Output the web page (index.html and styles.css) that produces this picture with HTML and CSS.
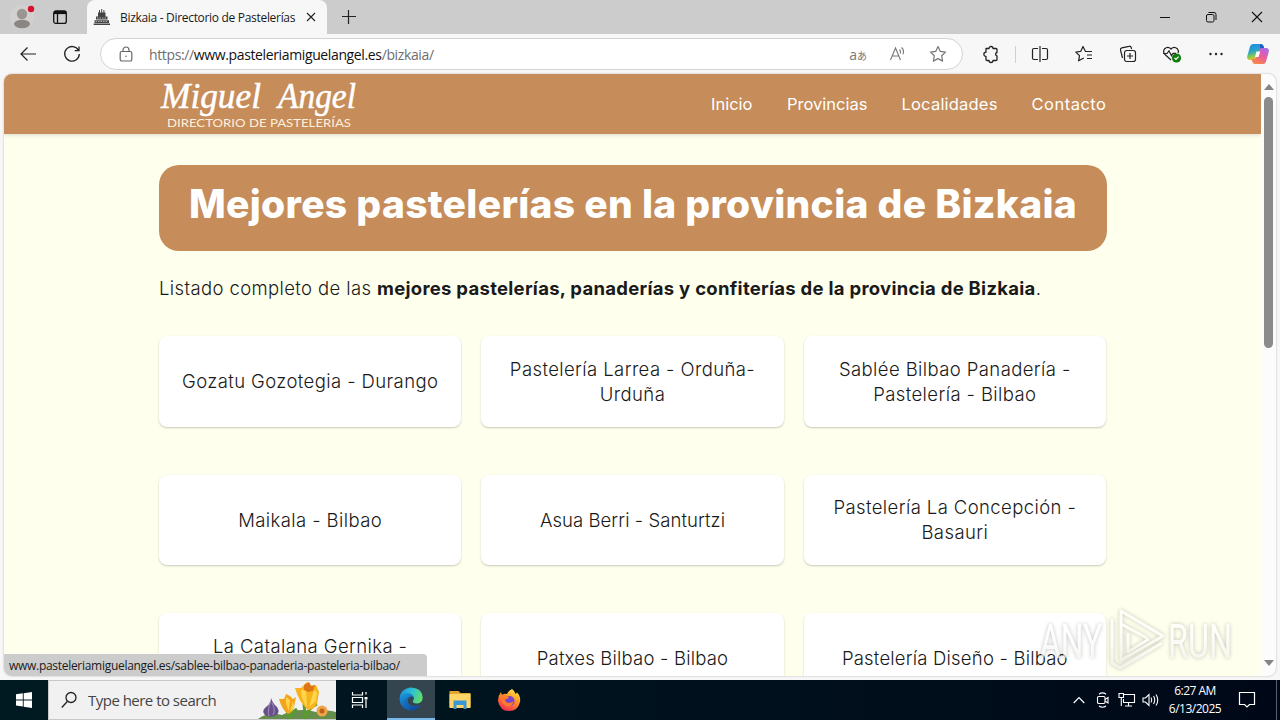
FILE: index.html
```html
<!DOCTYPE html>
<html lang="es">
<head>
    <meta charset="UTF-8">
    <meta name="viewport" content="width=device-width, initial-scale=1.0">
    <title>Bizkaia - Directorio de Pastelerías</title>
    <link rel="stylesheet" href="styles.css">
</head>
<body>
    <div class="tabbar">
        <div class="profile">
            <svg width="36" height="34" viewBox="0 0 36 34"><circle cx="18" cy="17" r="12" fill="#d3d1cf"/><circle cx="18" cy="14" r="5.2" fill="#9a9592"/><ellipse cx="18" cy="24" rx="8" ry="4.2" fill="#8b8683"/><circle cx="27" cy="9" r="3.2" fill="#d8122c"/></svg>
        </div>
        <div class="workspaces">
            <svg width="16" height="16" viewBox="0 0 16 16" fill="none" stroke="#111" stroke-width="1.3"><rect x="1.7" y="2" width="12.6" height="12.4" rx="2.2"/><path d="M2 3.6h12" stroke-width="3"/><path d="M5.5 4v10"/></svg>
        </div>
        <div class="tab">
            <svg width="18" height="18" viewBox="0 0 18 18" fill="#444"><path d="M5 4.500h7.500v4H5zM3 8.600h11.500v3H3zM1.500 12.200h14.500v2.700H1.500zM.7 15.500h16.300v1.400H.7zM6 2h1v2.500H6zM8.200 1h1v3.500h-1zM10.400 2h1v2.500h-1z"/><path d="M4 10h9M2.500 13.500h12" stroke="#ddd" stroke-width=".7" stroke-dasharray="1.500 1"/></svg>
            <span class="tab-title">Bizkaia - Directorio de Pastelerías</span>
            <svg class="tab-close" width="10" height="10" viewBox="0 0 10 10" stroke="#222" stroke-width="1.1"><path d="M1 1l8 8M9 1l-8 8"/></svg>
        </div>
        <svg class="new-tab" width="14" height="14" viewBox="0 0 14 14" stroke="#222" stroke-width="1.2"><path d="M0 6.500h14M6.500 0v14"/></svg>
        <div class="window-buttons">
            <span><svg width="12" height="12" viewBox="0 0 12 12" stroke="#111"><path d="M1 6.500h10"/></svg></span>
            <span><svg width="12" height="12" viewBox="0 0 12 12" fill="none" stroke="#111"><rect x="1.500" y="3.500" width="7.500" height="7.500" rx="1.500"/><path d="M3.500 1.500h5.500q2 0 2 2V9"/></svg></span>
            <span><svg width="12" height="12" viewBox="0 0 12 12" stroke="#111" stroke-width="1.100"><path d="M1 1l10 10M11 1L1 11"/></svg></span>
        </div>
    </div>

    <div class="toolbar">
        <div class="tool back"><svg width="18" height="16" viewBox="0 0 18 16" fill="none" stroke="#222" stroke-width="1.200"><path d="M17 8H2M8.500 1.500L2 8l6.500 6.500"/></svg></div>
        <div class="tool"><svg width="18" height="18" viewBox="0 0 18 18" fill="none" stroke="#222" stroke-width="1.300"><path d="M15.500 5.500A7.300 7.300 0 1 0 16.300 9M16 1.500v4.200h-4.300"/></svg></div>
        <div class="address">
            <svg class="lock" width="14" height="16" viewBox="0 0 14 16" fill="none" stroke="#666" stroke-width="1.200"><rect x="1.200" y="5.500" width="11.600" height="9.500" rx="1.600"/><path d="M4 5.500V4a3 3 0 0 1 6 0v1.500"/><circle cx="7" cy="10.300" r=".8" fill="#666" stroke="none"/></svg>
            <span class="url">https://<b>www.pasteleriamiguelangel.es</b>/bizkaia/</span>
            <span class="translate">a<small>あ</small></span>
            <svg class="read" width="18" height="16" viewBox="0 0 18 16" fill="none" stroke="#777" stroke-width="1.100"><path d="M1.500 14L6.500 2l5 12M3 10h7M10.500 3.500q1.500 1.500.8 4M12.500 1.500q3 2.800 1.500 6.800"/></svg>
            <svg width="18" height="18" viewBox="0 0 18 18" fill="none" stroke="#777" stroke-width="1.200" stroke-linejoin="round"><path d="M9 1.500l2.300 4.900 5.200.7-3.800 3.700.9 5.300L9 13.600l-4.600 2.500.9-5.300L1.500 7.100l5.200-.7z"/></svg>
        </div>
        <div class="tool ext"><svg width="18" height="18" viewBox="0 0 18 18" fill="none" stroke="#222" stroke-width="1.300" stroke-linejoin="round"><path d="M4 3.500h3a2 2 0 0 1 4 0h3q1 0 1 1v3a1.800 1.800 0 0 0 0 3.500v3.500q0 1-1 1h-3a2 2 0 0 1-4 0H5q-1 0-1-1V11.500a2 2 0 0 1 0-4.300z"/></svg></div>
        <div class="separator"></div>
        <div class="tool"><svg width="18" height="18" viewBox="0 0 18 18" fill="none" stroke="#222" stroke-width="1.200"><path d="M7 3.500H3q-1.500 0-1.500 1.500v8q0 1.500 1.500 1.500h4M11 3.500h4q1.500 0 1.500 1.500v8q0 1.500-1.500 1.500h-4M9 1v16"/></svg></div>
        <div class="tool"><svg width="18" height="18" viewBox="0 0 18 18" fill="none" stroke="#222" stroke-width="1.200" stroke-linejoin="round"><path d="M11 6.500h-.5L8 1.500 5.800 6.300l-5 .7 3.700 3.600-.9 5.200 5.200-2.800M11 6.500h6M12 10h5M12 13.500h5"/></svg></div>
        <div class="tool"><svg width="18" height="18" viewBox="0 0 18 18" fill="none" stroke="#222" stroke-width="1.200"><path d="M3.500 13L1.500 5q-.4-1.700 1.300-2.200L10 1.300q1.600-.4 2.200 1.200l.4 1.500"/><rect x="5.500" y="5.500" width="11" height="11" rx="2.200"/><path d="M11 8v6M8 11h6"/></svg></div>
        <div class="tool"><svg width="20" height="18" viewBox="0 0 20 18" fill="none" stroke="#222" stroke-width="1.200"><path d="M9 15L3 9.500q-2.500-3-.4-5.700Q6 .8 9 4q3-3.200 6.300-.3 1.700 2 .8 4.300M1 8.500h4l2-2.700 2.500 5 1.500-2.500h3"/><circle cx="14.500" cy="13" r="4.600" fill="#107c10" stroke="none"/><path d="M12.500 13l1.500 1.500 2.600-2.800" stroke="#fff"/></svg></div>
        <div class="tool"><svg width="16" height="4" viewBox="0 0 16 4" fill="#222"><circle cx="2.500" cy="2" r="1.200"/><circle cx="8" cy="2" r="1.200"/><circle cx="13.500" cy="2" r="1.200"/></svg></div>
        <div class="tool copilot">
            <svg width="24" height="24" viewBox="0 0 24 24">
                <defs>
                    <linearGradient id="cp1" x1="0" y1="0" x2=".3" y2="1"><stop offset="0" stop-color="#1b88e8"/><stop offset=".5" stop-color="#2aa6c8"/><stop offset=".8" stop-color="#8ccb4a"/><stop offset="1" stop-color="#f5bd22"/></linearGradient>
                    <linearGradient id="cp2" x1=".8" y1="0" x2=".3" y2="1"><stop offset="0" stop-color="#a66bea"/><stop offset=".5" stop-color="#ec5b9c"/><stop offset="1" stop-color="#f88a46"/></linearGradient>
                </defs>
                <path d="M7 2h8q2 0 2.700 2.200L18.500 7H16q-2 0-2.700 2.200L11 16q-.8 2-3 2H4q-3.500 0-2.700-4L4 4.500Q4.700 2 7 2z" fill="url(#cp1)"/>
                <path d="M14 2q2.800 0 3.600 2.500L18.400 7h-4.200z" fill="#2458cb"/>
                <path d="M17 22H9q-2 0-2.700-2.200L5.500 17H8q2 0 2.700-2.200L13 8q.8-2 3-2h4q3.500 0 2.700 4L20 19.500q-.7 2.500-3 2.500z" fill="url(#cp2)"/>
                <path d="M10.500 9.500h3.700l-1.600 5.500H9z" fill="#fff"/>
            </svg>
        </div>
    </div>

    <div class="viewport">
        <div class="page">
            <header class="site-header">
                <svg class="logo" width="200" height="60" viewBox="0 0 200 60">
                    <text class="logo-name" x="2" y="34" textLength="100" lengthAdjust="spacingAndGlyphs">Miguel</text>
                    <text class="logo-name" x="119" y="34" textLength="78" lengthAdjust="spacingAndGlyphs">Angel</text>
                    <text class="logo-sub" x="8" y="53" textLength="184" lengthAdjust="spacingAndGlyphs">DIRECTORIO DE PASTELERÍAS</text>
                </svg>
                <nav class="menu">
                    <a class="inicio">Inicio</a>
                    <a class="provincias">Provincias</a>
                    <a class="localidades">Localidades</a>
                    <a class="contacto">Contacto</a>
                </nav>
            </header>
            <main class="container">
                <h1>Mejores pastelerías en la provincia de Bizkaia</h1>
                <p class="intro">Listado completo de las <strong>mejores pastelerías, panaderías y confiterías de la provincia de Bizkaia</strong>.</p>
                <div class="cards">
                    <a class="card">Gozatu Gozotegia - Durango</a>
                    <a class="card">Pastelería Larrea - Orduña-<br>Urduña</a>
                    <a class="card">Sablée Bilbao Panadería -<br>Pastelería - Bilbao</a>
                    <a class="card">Maikala - Bilbao</a>
                    <a class="card tighter">Asua Berri - Santurtzi</a>
                    <a class="card">Pastelería La Concepción -<br>Basauri</a>
                    <a class="card">La Catalana Gernika -<br>&nbsp;</a>
                    <a class="card tight">Patxes Bilbao - Bilbao</a>
                    <a class="card tight">Pastelería Diseño - Bilbao</a>
                </div>
            </main>
        </div>
        <div class="scrollbar">
            <svg width="10" height="6" viewBox="0 0 10 6" fill="#858585"><path d="M5 0l5 6H0z"/></svg>
            <div class="thumb"></div>
            <svg class="down" width="10" height="6" viewBox="0 0 10 6" fill="#858585"><path d="M5 6l5-6H0z"/></svg>
        </div>
        <div class="status">www.pasteleriamiguelangel.es/sablee-bilbao-panaderia-pasteleria-bilbao/</div>
    </div>

    <svg class="watermark" width="210" height="76" viewBox="0 0 210 76">
        <defs><linearGradient id="wm" x1="0" y1="0" x2="0" y2="1"><stop offset=".4" stop-color="#fff"/><stop offset="1" stop-color="#eeede6"/></linearGradient></defs>
        <text x="10" y="56" textLength="62" lengthAdjust="spacingAndGlyphs">ANY</text>
        <g fill="none" stroke="url(#wm)" stroke-width="3" stroke-linejoin="round">
            <path d="M91 22V9l42 25-42 24V22l26 14"/>
            <path d="M82 17v44l8 5 42-25"/>
            <path d="M98 31v19l21-13"/>
        </g>
        <text x="138" y="56" textLength="64" lengthAdjust="spacingAndGlyphs">RUN</text>
    </svg>

    <div class="taskbar">
        <div class="start"><svg width="16" height="16" viewBox="0 0 16 16" fill="#fff"><path d="M0 2.300l6.800-1v6.200H0zM7.700 1.200L16 0v7.500H7.700zM0 8.400h6.800v6.200L0 13.600zM7.700 8.400H16V16l-8.300-1.200z"/></svg></div>
        <div class="search">
            <svg width="16" height="18" viewBox="0 0 16 18" fill="none" stroke="#222" stroke-width="1.300"><circle cx="10" cy="6.500" r="5"/><path d="M6.500 10.300L.8 16.500"/></svg>
            <span>Type here to search</span>
            <svg class="flowers" width="80" height="38" viewBox="0 0 80 38">
                <path d="M2 38q10-8 24-4 16-8 34-3 12-3 20 0v7z" fill="#668e4b"/>
                <path d="M49 38Q49 30 48 23M49 38q2-10 12-15M33 38q-2-6-2-13M34 37q2-6 7-9" fill="none" stroke="#5a9a31" stroke-width="3"/>
                <path d="M15 17q2 6 6 9 4 6-2 9-6 2-10-1-4-4 1-8 5-3 5-9z" fill="#65508a"/>
                <path d="M15 20q-4 9-2 15M16 22q4 7 1 12" fill="none" stroke="#9a80b4" stroke-width="1.200"/>
                <path d="M23 18l5 0 2-5 4 2 3 3 3-2-2 10q-2 6-6 7-6-4-9-15z" fill="#f2a51b"/>
                <path d="M30 16l4 3-1 11q-4-7-3-14zM37 20l-3 11 4-5z" fill="#ffd447"/>
                <path d="M39 7l6 0 6-6 5 4 4-1 3 7-2 12q-4 6-9 6-9-8-13-22z" fill="#f7b21c"/>
                <path d="M45 9l5 0 1 17q-6-7-6-17zM58 9l-5 17 7-6 1-9z" fill="#ffd64a"/>
                <path d="M48 4l5-3 2 4 4-1-2 6-5 1-4-2z" fill="#de7615"/>
                <circle cx="66" cy="30" r="5.500" fill="#eda64a"/><circle cx="66" cy="30" r="2.500" fill="#c45f1a"/>
            </svg>
        </div>
        <div class="app"><svg width="18" height="18" viewBox="0 0 18 18" fill="none" stroke="#fff" stroke-width="1.200"><path d="M1.500 1v3h10V1M1.500 17v-3h10v3M1.500 6.500h10v5h-10zM15 1v2.500M15 9v8"/><path d="M13.500 6h3v2.500h-3z" fill="#fff" stroke="none"/></svg></div>
        <div class="app active">
            <svg width="24" height="24" viewBox="0 0 24 24">
                <defs>
                    <linearGradient id="eg1" x1="0" y1=".3" x2="1" y2=".6"><stop offset="0" stop-color="#1b8fdc"/><stop offset=".5" stop-color="#30c3d1"/><stop offset="1" stop-color="#63de65"/></linearGradient>
                    <linearGradient id="eg2" x1="0" y1="0" x2=".6" y2="1"><stop offset="0" stop-color="#1b9de2"/><stop offset="1" stop-color="#104c9f"/></linearGradient>
                </defs>
                <path d="M.6 11Q1.500 2 11 .5q12 0 12.700 10.300-.3 5-5 5.700-5 .2-4.900-2.500 2-2 .6-4.500-5-5.500-13.800 1.500z" fill="url(#eg1)"/>
                <path d="M.5 12Q1 6 8 6q5 0 6.500 4-4-1.500-5.500 2-1.500 6 6 7 3.500.2 6.500-1.500Q18 24 11 23.500.8 22 .5 12z" fill="url(#eg2)"/>
                <path d="M9 12q-4 6 2.500 11.400Q6 22 5.500 16.500 5.500 12 9.500 10z" fill="#1668b5"/>
            </svg>
        </div>
        <div class="app"><svg width="22" height="20" viewBox="0 0 22 20"><path d="M.5 1h9l2 2h10v14H.5z" fill="#e2a52d"/><path d="M.5 4h21v14H.5z" fill="#ffd667"/><path d="M4.500 10.500h13V19h-3v-4h-7v4h-3z" fill="#3c96d3"/></svg></div>
        <div class="app">
            <svg width="24" height="24" viewBox="0 0 24 24">
                <defs><linearGradient id="ff1" x1=".8" y1="0" x2=".3" y2="1"><stop offset="0" stop-color="#fff04e"/><stop offset=".4" stop-color="#ff9a25"/><stop offset="1" stop-color="#f42a58"/></linearGradient></defs>
                <path d="M15 1q3 2 3.500 5 1.500-.5 1-2Q24 8 23 14q-2 9-11 9T1 13Q.8 8 4 4l1 3q2-2 5-1 1-3 5-5z" fill="url(#ff1)"/>
                <circle cx="12.500" cy="13" r="5" fill="#7646d2"/>
                <path d="M4 8q5-2 8 1-1 2-4 2.500 0 3 4 3.500 3 0 4.500-2-1 6-6.500 5.500Q4 17 4 8z" fill="#ff7a2a"/>
            </svg>
        </div>
        <div class="tray">
            <span><svg width="12" height="8" viewBox="0 0 12 8" fill="none" stroke="#fff" stroke-width="1.200"><path d="M.7 7L6 1.500 11.300 7"/></svg></span>
            <span><svg width="14" height="18" viewBox="0 0 14 18" fill="none" stroke="#fff" stroke-width="1.100"><rect x="1.500" y="5.500" width="7.500" height="7" rx="1.200"/><path d="M9 8.500l3-2v5.500l-3-2M3 3.200Q6.500.5 10 3.200M3 15q3.500 2.500 7 0"/></svg></span>
            <span><svg width="18" height="16" viewBox="0 0 18 16" fill="none" stroke="#fff" stroke-width="1.100"><path d="M6 2.500h10.500v8H5.500V7M10.500 10.500v3M7 14h7M1 1.500h4.500v4H1zM3.300 5.500v8.500"/></svg></span>
            <span><svg width="18" height="16" viewBox="0 0 18 16" fill="none" stroke="#fff" stroke-width="1.100"><path d="M1 6h2.500L7 2.500v11L3.500 10H1zM9 5.500q1.500 2.500 0 5M11.500 4q2.500 4 0 8M14 2.500q3.500 5.500 0 11"/></svg></span>
        </div>
        <div class="clock"><span>6:27 AM</span><span>6/13/2025</span></div>
        <div class="notify"><svg width="18" height="18" viewBox="0 0 18 18" fill="none" stroke="#fff" stroke-width="1.200"><path d="M1.500 1.500h15v12h-5L9 16l-2.500-2.500h-5z"/></svg></div>
        <div class="desktop"></div>
    </div>
</body>
</html>
```

FILE: styles.css
```css
* {
    box-sizing: border-box;
}
body {
    margin: 0;
    width: 1280px;
    height: 720px;
    overflow: hidden;
    display: flex;
    flex-direction: column;
    background-color: #f7f7f7;
    font-family: 'Open Sans', 'Noto Sans', 'Noto Sans CJK JP', sans-serif;
    color: #1a1a1a;
}
svg {
    display: block;
    flex-shrink: 0;
    overflow: visible;
}

/* browser tabs */
.tabbar {
    height: 34px;
    flex-shrink: 0;
    background-color: #cccccc;
    display: flex;
    align-items: center;
}
.profile {
    width: 42px;
    padding-left: 4px;
}
.workspaces {
    width: 45px;
    padding-left: 10px;
}
.tab {
    width: 240px;
    height: 34px;
    padding: 0 11px 0 6px;
    display: flex;
    align-items: center;
    background-color: #f7f7f7;
    border-radius: 8px 8px 0 0;
}
.tab-title {
    width: 177px;
    margin-left: 9px;
    font-size: 12px;
    letter-spacing: -0.31px;
    white-space: nowrap;
}
.tab-close {
    margin-left: auto;
}
.new-tab {
    margin-left: 15px;
}
.window-buttons {
    margin-left: auto;
    display: flex;
}
.window-buttons span {
    width: 46px;
    display: flex;
    justify-content: center;
}

/* address row */
.toolbar {
    height: 40px;
    flex-shrink: 0;
    display: flex;
    align-items: center;
}
.tool {
    width: 44px;
    display: flex;
    justify-content: center;
}
.back {
    margin-left: 6px;
}
.address {
    width: 863px;
    height: 32px;
    margin-left: 6px;
    padding: 0 15px 0 18px;
    display: flex;
    align-items: center;
    background-color: #fff;
    border: 1px solid #d3d3d3;
    border-radius: 16px;
}
.url {
    margin-left: 16px;
    font-size: 14px;
    letter-spacing: -0.37px;
    color: #6e6e6e;
}
.url b {
    font-weight: 400;
    color: #111;
}
.translate {
    margin-left: auto;
    margin-right: 22px;
    font-size: 14px;
    letter-spacing: 0;
    color: #777;
}
.translate small {
    font-size: 10px;
}
.read {
    margin-right: 22px;
}
.ext {
    margin-left: 6px;
}
.separator {
    width: 1px;
    height: 17px;
    margin: 0 2px;
    background-color: #d0d0d0;
}
.copilot {
    width: 40px;
}

/* web page */
.viewport {
    position: relative;
    width: 1272px;
    height: 602px;
    margin: 0 4px 4px;
    display: flex;
    flex-shrink: 0;
    overflow: hidden;
    border-radius: 8px;
    background-color: #fcfcfc;
    box-shadow: 0 0 2px rgba(0, 0, 0, 0.3);
}
.page {
    width: 1257px;
    overflow: hidden;
    background-color: #ffffee;
    font-family: 'Inter', 'Open Sans', sans-serif;
}
.site-header {
    height: 60px;
    padding: 0 154px 0 155px;
    display: flex;
    justify-content: space-between;
    align-items: center;
    background-color: #c68c59;
    box-shadow: 0 1px 4px rgba(0, 0, 0, 0.15);
}
.logo-name {
    font-family: 'Liberation Serif', serif;
    font-size: 35px;
    font-style: italic;
    fill: #fff;
    stroke: #fff;
    stroke-width: 0.5px;
}
.logo-sub {
    font-family: 'Lato', sans-serif;
    font-size: 10.5px;
    fill: #ffefdc;
}
.menu {
    display: flex;
    gap: 34px;
    padding-bottom: 1px;
    font-size: 16.5px;
    color: #fff;
}
.inicio {
    width: 42px;
}
.provincias {
    width: 80.5px;
}
.localidades {
    width: 96px;
    letter-spacing: 0.2px;
}
.contacto {
    width: 75.5px;
    letter-spacing: 0.5px;
}
.container {
    width: 948px;
    margin: 31px auto 0 155px;
}
h1 {
    height: 86px;
    margin: 0;
    line-height: 77px;
    text-align: center;
    white-space: nowrap;
    font-size: 39px;
    letter-spacing: 0.3px;
    font-weight: 800;
    color: #fff;
    background-color: #c68c59;
    border-radius: 20px;
}
.intro {
    margin: 24px 0 35px;
    line-height: 26px;
    font-size: 18.5px;
    letter-spacing: 0.38px;
    font-weight: 300;
    white-space: nowrap;
}
.intro strong {
    font-weight: 700;
    letter-spacing: 0.28px;
}
.cards {
    width: 947px;
    display: grid;
    grid-template-columns: repeat(3, 1fr);
    gap: 48px 20px;
}
.card {
    height: 90.6px;
    padding-top: 1px;
    display: flex;
    justify-content: center;
    align-items: center;
    text-align: center;
    white-space: nowrap;
    line-height: 25px;
    font-size: 18.5px;
    letter-spacing: 0.4px;
    font-weight: 300;
    background-color: #fff;
    border-radius: 8px;
    box-shadow: 0 1px 2px rgba(0, 0, 0, 0.22);
}
.tight {
    letter-spacing: 0.2px;
}
.tighter {
    letter-spacing: 0.06px;
}
.scrollbar {
    width: 15px;
    padding-top: 10px;
    display: flex;
    flex-direction: column;
    align-items: center;
}
.thumb {
    width: 9px;
    height: 251px;
    margin-top: 7px;
    background-color: #8b8b8b;
    border-radius: 5px;
}
.down {
    margin-top: auto;
    margin-bottom: 10px;
}
.status {
    position: absolute;
    left: 0;
    bottom: 0;
    width: 423px;
    height: 22px;
    padding-left: 5px;
    line-height: 23px;
    font-size: 12px;
    letter-spacing: -0.29px;
    white-space: nowrap;
    background-color: #cccccc;
    border-top-right-radius: 4px;
}
.watermark {
    position: absolute;
    left: 1030px;
    top: 602px;
    opacity: 0.7;
    filter: drop-shadow(0 0 2px rgba(0, 0, 0, 0.35));
}
.watermark text {
    font-family: 'Roboto', sans-serif;
    font-size: 48px;
    font-weight: 400;
    fill: url(#wm);
}

/* windows taskbar */
.taskbar {
    height: 40px;
    flex-shrink: 0;
    display: flex;
    align-items: center;
    background: linear-gradient(90deg, #001a22, #00101c 60%, #000818);
    color: #fff;
}
.start {
    width: 48px;
    display: flex;
    justify-content: center;
}
.search {
    width: 288px;
    height: 40px;
    padding-left: 12px;
    display: flex;
    align-items: center;
    background-color: #f1f1f1;
    border: 1px solid #c8c8c8;
    border-right: none;
    color: #444;
    font-size: 15px;
}
.search span {
    margin-left: 11px;
    letter-spacing: -0.52px;
    white-space: nowrap;
}
.flowers {
    margin-left: auto;
}
.app {
    width: 48px;
    height: 40px;
    margin-right: 1px;
    display: flex;
    justify-content: center;
    align-items: center;
}
.active {
    margin-left: 2px;
    background-color: #34454f;
    border-bottom: 2px solid #76b9ed;
}
.tray {
    margin-left: auto;
    display: flex;
}
.tray span {
    width: 24px;
    display: flex;
    justify-content: center;
    align-items: center;
}
.clock {
    width: 64px;
    display: flex;
    flex-direction: column;
    align-items: center;
    font-size: 12px;
    line-height: 18px;
    letter-spacing: -0.5px;
}
.notify {
    width: 49px;
    padding-left: 11px;
}
.desktop {
    width: 4px;
    height: 40px;
    border-left: 1px solid #55606b;
}
```
